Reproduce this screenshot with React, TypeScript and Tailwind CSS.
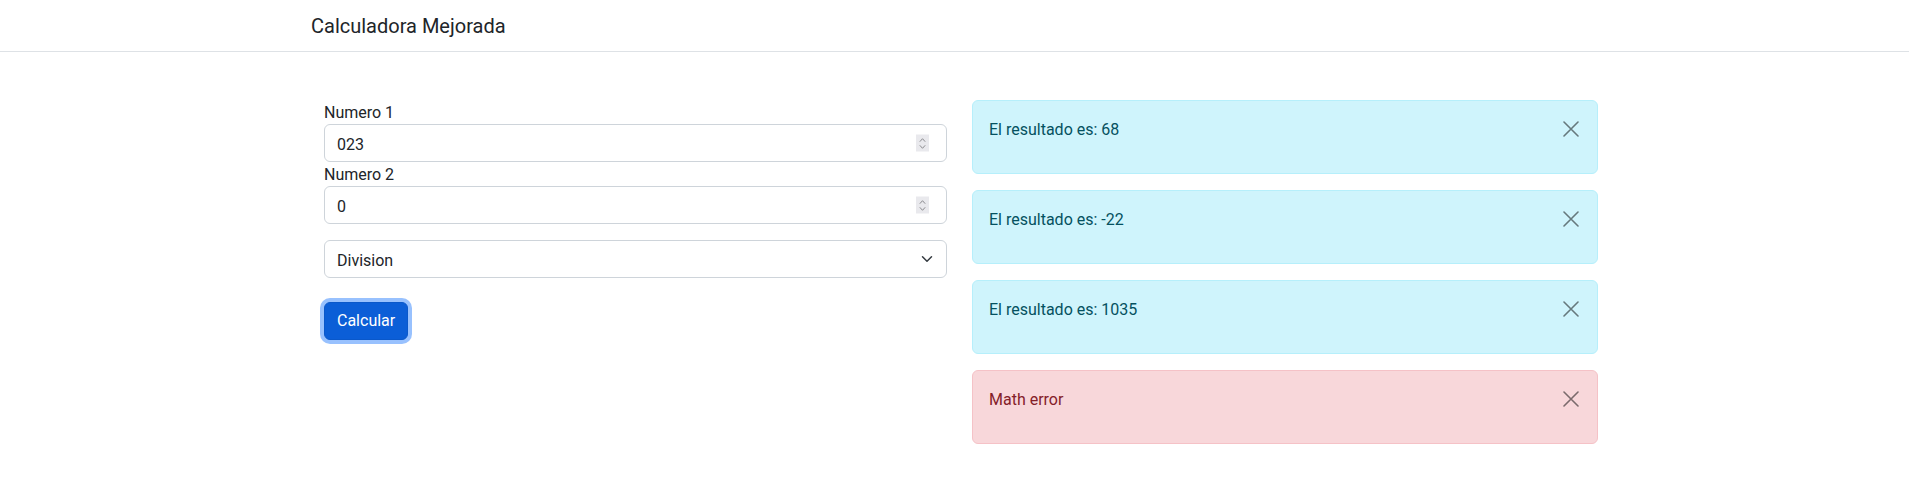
import React from 'react';

type Resultado = { texto: string; tipo: 'info' | 'error' };

const resultados: Resultado[] = [
	{ texto: 'El resultado es: 68', tipo: 'info' },
	{ texto: 'El resultado es: -22', tipo: 'info' },
	{ texto: 'El resultado es: 1035', tipo: 'info' },
	{ texto: 'Math error', tipo: 'error' },
];

function Spinner() {
	return (
		<div className="absolute right-[17px] top-1/2 -translate-y-1/2 w-[13px] h-[17px] bg-[#e9e9ed] flex flex-col items-center justify-center gap-[2px]">
			<svg width="7" height="5" viewBox="0 0 7 5" fill="none">
				<path d="M0.8 4.2L3.5 1.2L6.2 4.2" stroke="#8b8b8f" strokeWidth="1" />
			</svg>
			<svg width="7" height="5" viewBox="0 0 7 5" fill="none">
				<path d="M0.8 0.8L3.5 3.8L6.2 0.8" stroke="#8b8b8f" strokeWidth="1" />
			</svg>
		</div>
	);
}

function CampoNumero({ label, valor }: { label: string; valor: string }) {
	return (
		<div className="flex flex-col">
			<label className="block h-6 leading-[26px]">{label}</label>
			<div className="relative h-[38px] border border-[#ced4da] rounded-[6px] bg-white flex items-center px-3 pt-[4px]">
				<span>{valor}</span>
				<Spinner />
			</div>
		</div>
	);
}

function Alerta({ data }: { data: Resultado }) {
	const colores =
		data.tipo === 'info'
			? 'bg-[#cff4fc] border-[#b6effb] text-[#055160]'
			: 'bg-[#f8d7da] border-[#f5c2c7] text-[#842029]';
	return (
		<div className={`relative h-[74px] border rounded-[6px] pl-4 pr-12 pt-[17px] ${colores}`}>
			<p className="leading-6">{data.texto}</p>
			<button className="absolute top-[20px] right-[18px] w-4 h-4 opacity-50">
				<svg width="16" height="16" viewBox="0 0 16 16" fill="none">
					<path d="M1 1L15 15M15 1L1 15" stroke="#000" strokeWidth="1.6" strokeLinecap="round" />
				</svg>
			</button>
		</div>
	);
}

export default function App() {
	return (
		<div className="min-h-screen bg-white text-[16px] text-[#212529] font-['Segoe_UI',Roboto,sans-serif]">
			<nav className="h-[52px] border-b border-[#dee2e6] flex items-center pl-[311px]">
				<span className="text-[20px] leading-[30px]">Calculadora Mejorada</span>
			</nav>

			<div className="flex pl-[324px] pt-[48px] gap-[25px]">
				<div className="w-[623px] flex flex-col">
					<CampoNumero label="Numero 1" valor="023" />
					<CampoNumero label="Numero 2" valor="0" />

					<div className="relative mt-4 h-[38px] border border-[#ced4da] rounded-[6px] bg-white flex items-center px-3 pt-[4px]">
						<span>Division</span>
						<svg className="absolute right-[13px] top-1/2 -translate-y-1/2" width="12" height="12" viewBox="0 0 16 16" fill="none">
							<path d="M2 5l6 6 6-6" stroke="#343a40" strokeWidth="2" strokeLinecap="round" strokeLinejoin="round" />
						</svg>
					</div>

					<div className="mt-6">
						<button className="h-[38px] px-3 rounded-[6px] bg-[#0b5ed7] border border-[#0a58ca] text-white shadow-[0_0_0_4px_rgba(49,132,253,0.5)]">
							Calcular
						</button>
					</div>
				</div>

				<div className="w-[626px] flex flex-col gap-4">
					{resultados.map((r, i) => (
						<Alerta key={i} data={r} />
					))}
				</div>
			</div>
		</div>
	);
}
